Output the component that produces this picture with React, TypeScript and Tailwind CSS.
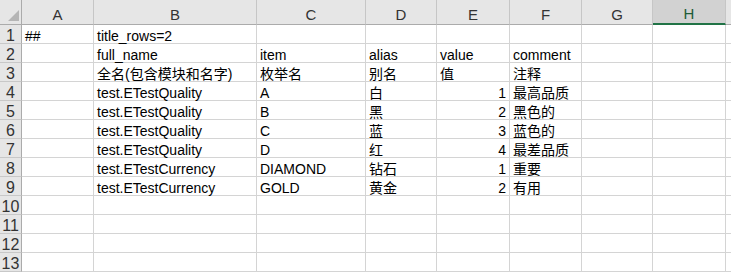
import React from "react";

const COLS = ["A", "B", "C", "D", "E", "F", "G", "H", ""];

// rows of cell values, columns A..F
const DATA: (string | number)[][] = [
  ["##", "title_rows=2", "", "", "", ""],
  ["", "full_name", "item", "alias", "value", "comment"],
  ["", "全名(包含模块和名字)", "枚举名", "别名", "值", "注释"],
  ["", "test.ETestQuality", "A", "白", 1, "最高品质"],
  ["", "test.ETestQuality", "B", "黑", 2, "黑色的"],
  ["", "test.ETestQuality", "C", "蓝", 3, "蓝色的"],
  ["", "test.ETestQuality", "D", "红", 4, "最差品质"],
  ["", "test.ETestCurrency", "DIAMOND", "钻石", 1, "重要"],
  ["", "test.ETestCurrency", "GOLD", "黄金", 2, "有用"],
  [],
  [],
  [],
  [],
];

export default function App() {
  return (
    <div
      className="w-[731px] h-[272px] overflow-hidden bg-white text-[14px] text-black"
      style={{ fontFamily: '"Liberation Sans", "Noto Sans CJK SC", sans-serif' }}
    >
      <div className="grid grid-cols-[22px_72px_163px_109px_71px_73px_72px_71px_73px_1fr] grid-rows-[25px_repeat(13,19px)]">
        {/* corner */}
        <div className="relative bg-[#e6e6e6] border-r border-b border-[#ababab]">
          <div className="absolute left-[8px] top-[10px] w-0 h-0 border-l-[11px] border-l-transparent border-b-[11px] border-b-[#b5b5b5]" />
        </div>
        {COLS.map((c, i) => (
          <div
            key={i}
            className={`flex items-center justify-center pt-[6px] ${
              c === "H"
                ? "bg-[#d2d2d2] border-b-2 border-b-[#217346] border-r border-r-[#c6c6c6] text-[#1e5c38]"
                : "bg-[#e6e6e6] border-b border-b-[#ababab] border-r border-r-[#c6c6c6] text-[#333]"
            } text-[15px]`}
          >
            {c}
          </div>
        ))}

        {DATA.map((row, r) => (
          <React.Fragment key={r}>
            <div className="flex items-end justify-center bg-[#e6e6e6] border-r border-r-[#ababab] border-b border-b-[#c8c8c8] text-[16px] leading-[15px] text-[#333]">
              {r + 1}
            </div>
            {COLS.map((_, c) => {
              const v = row[c];
              const isNum = typeof v === "number";
              return (
                <div
                  key={c}
                  className={`flex items-end whitespace-nowrap border-r border-b border-[#d4d4d4] px-[3px] leading-[14px] ${
                    isNum ? "justify-end" : "justify-start"
                  }`}
                >
                  {v ?? ""}
                </div>
              );
            })}
          </React.Fragment>
        ))}
      </div>
    </div>
  );
}
